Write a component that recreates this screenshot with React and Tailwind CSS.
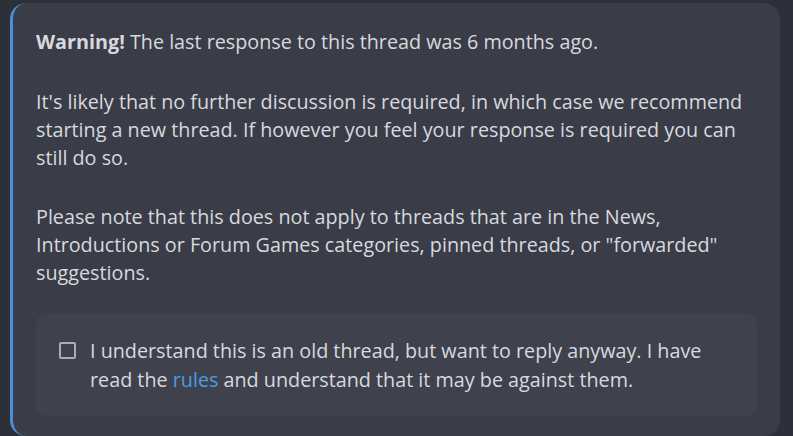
import React, { useState } from 'react';

const App = () => {
    const [checked, setChecked] = useState(false);

    return (
        <div className="min-h-screen bg-[#2e3039] pt-[3px] pl-[10px] pr-[13px] font-['Open_Sans',sans-serif] overflow-hidden">
            <div className="h-[433px] bg-[#3a3d47] rounded-2xl border-l-[3px] border-[#4a90d9] pl-[23px] pr-[23px] pt-[25px] text-[19.75px] text-[#d7d9df] leading-[28px]">
                <p className="mb-[32px]">
                    <strong className="font-bold">Warning!</strong> The last response to this thread was 6 months ago.
                </p>
                <p className="mb-[31px]">
                    It's likely that no further discussion is required, in which case we recommend starting a new thread. If however you feel your response is required you can still do so.
                </p>
                <p>
                    Please note that this does not apply to threads that are in the News, Introductions or Forum Games categories, pinned threads, or "forwarded" suggestions.
                </p>

                <div className="mt-[26px] bg-[#3f424c] rounded-xl pl-[23px] pr-[23px] pt-[23px] pb-[22px]">
                    <label className="flex items-start gap-[14px] leading-[29px] cursor-pointer">
                        <span
                            onClick={() => setChecked(!checked)}
                            className={`mt-[6px] shrink-0 w-[17px] h-[17px] border-2 border-[#a9adb8] rounded-[2px] ${checked ? 'bg-[#4a90d9]' : ''}`}
                        />
                        <span>
                            I understand this is an old thread, but want to reply anyway. I have read the <a href="#" className="text-[#4c9be8]">rules</a> and understand that it may be against them.
                        </span>
                    </label>
                </div>
            </div>
        </div>
    );
};

export default App;
